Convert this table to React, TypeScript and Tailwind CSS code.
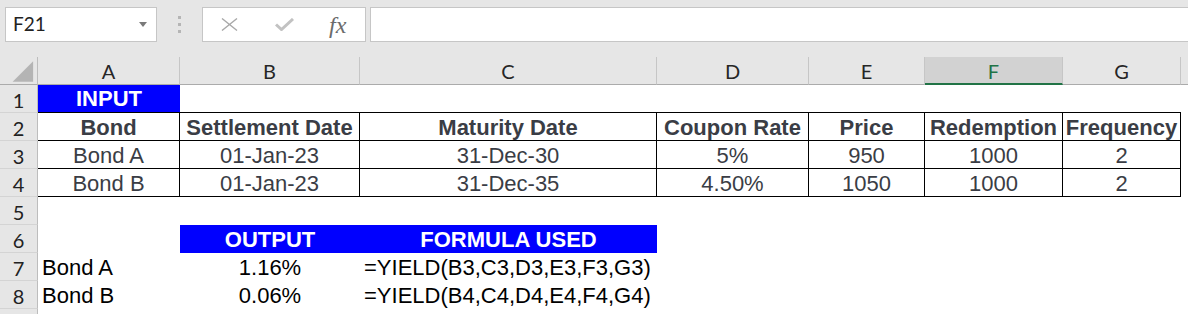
const COLS = 'grid grid-cols-[38px_142px_180px_297px_152px_116px_138px_118px_7px]';
const LETTERS = ['A', 'B', 'C', 'D', 'E', 'F', 'G'];

const cellText = "font-['Liberation_Sans',Arial,sans-serif] text-[22px] leading-none";
const headFont = "font-['Lato','Liberation_Sans',sans-serif] text-[20px] leading-none";

const tableRows = [
  ['Bond', 'Settlement Date', 'Maturity Date', 'Coupon Rate', 'Price', 'Redemption', 'Frequency'],
  ['Bond A', '01-Jan-23', '31-Dec-30', '5%', '950', '1000', '2'],
  ['Bond B', '01-Jan-23', '31-Dec-35', '4.50%', '1050', '1000', '2'],
];

function RowNum({ n }: { n?: number }) {
  return (
    <div
      className={`flex items-end justify-center pb-[2px] bg-[#e6e6e6] border-r border-r-[#bdbdbd] border-b border-b-[#d4d4d4] text-[#222] ${headFont}`}
    >
      {n}
    </div>
  );
}

function FormulaBar() {
  return (
    <div className="flex h-[57px] items-start bg-[#e6e6e6] pt-[7px] pl-[5px]">
      {/* name box */}
      <div className="flex h-[35px] w-[152px] items-center justify-between border border-[#c6c6c6] bg-white pl-[7px] pr-[9px] font-['Lato',sans-serif] text-[19px] text-[#222]">
        <span>F21</span>
        <svg width="8" height="5" viewBox="0 0 8 5">
          <path d="M0 0h8L4 5z" fill="#7a7a7a" />
        </svg>
      </div>

      {/* grip dots */}
      <div className="flex h-[35px] w-[45px] flex-col items-center justify-center gap-[4px]">
        <span className="h-[3px] w-[3px] bg-[#b5b5b5]" />
        <span className="h-[3px] w-[3px] bg-[#b5b5b5]" />
        <span className="h-[3px] w-[3px] bg-[#b5b5b5]" />
      </div>

      {/* cancel / enter / insert function */}
      <div className="flex h-[35px] w-[164px] items-center border border-[#c6c6c6] bg-white pl-[18px]">
        <svg width="17" height="13" viewBox="0 0 17 13">
          <path d="M1 0.5L16 12.5M16 0.5L1 12.5" stroke="#a9a9a9" strokeWidth="1.4" />
        </svg>
        <svg className="ml-[37px]" width="19" height="13" viewBox="0 0 19 13">
          <path d="M1 6.5L6.5 11.5L18 1" stroke="#c2c2c2" strokeWidth="3" fill="none" />
        </svg>
        <span className="ml-[35px] font-['Liberation_Serif',serif] text-[24px] italic leading-none text-[#6b6b6b]">
          fx
        </span>
      </div>

      {/* formula input */}
      <div className="ml-[4px] h-[35px] flex-1 border-y border-l border-[#c6c6c6] bg-white" />
    </div>
  );
}

function ColumnHeaders() {
  return (
    <div className={`${COLS} h-[28px] bg-[#e6e6e6]`}>
      <div className="flex items-start border-r border-r-[#bdbdbd] border-b border-b-[#ababab]">
        <svg width="38" height="27" viewBox="0 0 38 27">
          <path d="M34 4V25H13z" fill="#b4b4b4" />
        </svg>
      </div>
      {LETTERS.map((l) =>
        l === 'F' ? (
          <div
            key={l}
            className={`flex items-end justify-center pb-[2px] bg-[#d2d2d2] border-r border-r-[#c6c6c6] border-b-2 border-b-[#217346] text-[#217346] ${headFont}`}
          >
            {l}
          </div>
        ) : (
          <div
            key={l}
            className={`flex items-end justify-center pb-[3px] border-r border-r-[#c6c6c6] border-b border-b-[#ababab] text-[#262626] ${headFont}`}
          >
            {l}
          </div>
        ),
      )}
      <div className="border-b border-b-[#ababab]" />
    </div>
  );
}

export default function App() {
  return (
    <div className="h-[314px] w-[1188px] overflow-hidden bg-white">
      <FormulaBar />
      <ColumnHeaders />

      {/* row 1 */}
      <div className={`${COLS} h-[28px]`}>
        <RowNum n={1} />
        <div className={`flex items-end justify-center pb-[2px] bg-[#0000ff] border-b border-b-black font-bold text-white ${cellText}`}>
          INPUT
        </div>
        {LETTERS.slice(1).map((l) => (
          <div key={l} className="border-b border-b-black" />
        ))}
        <div />
      </div>

      {/* rows 2-4: bordered input table */}
      {tableRows.map((row, i) => (
        <div key={i} className={`${COLS} h-[28px]`}>
          <RowNum n={i + 2} />
          {row.map((v, j) => (
            <div
              key={j}
              className={`flex items-end justify-center pb-[1px] border-r border-b border-black text-[#3a3d45] ${cellText} ${i === 0 ? 'font-bold' : ''}`}
            >
              {v}
            </div>
          ))}
          <div />
        </div>
      ))}

      {/* row 5 */}
      <div className={`${COLS} h-[28px]`}>
        <RowNum n={5} />
      </div>

      {/* row 6: output headings */}
      <div className={`${COLS} h-[28px]`}>
        <RowNum n={6} />
        <div />
        <div className={`flex items-end justify-center pb-[2px] bg-[#0000ff] font-bold text-white ${cellText}`}>OUTPUT</div>
        <div className={`flex items-end justify-center pb-[2px] bg-[#0000ff] font-bold text-white ${cellText}`}>FORMULA USED</div>
      </div>

      {/* rows 7-8: results */}
      {[
        ['Bond A', '1.16%', '=YIELD(B3,C3,D3,E3,F3,G3)'],
        ['Bond B', '0.06%', '=YIELD(B4,C4,D4,E4,F4,G4)'],
      ].map(([name, out, f], i) => (
        <div key={name} className={`${COLS} h-[28px] text-black`}>
          <RowNum n={i + 7} />
          <div className={`flex items-end pl-[4px] pb-[2px] ${cellText}`}>{name}</div>
          <div className={`flex items-end justify-center pb-[2px] ${cellText}`}>{out}</div>
          <div className={`flex items-end pl-[4px] pb-[2px] whitespace-nowrap ${cellText}`}>{f}</div>
        </div>
      ))}

      {/* next row, only its top edge shows */}
      <div className={`${COLS} h-[28px]`}>
        <RowNum />
      </div>
    </div>
  );
}
